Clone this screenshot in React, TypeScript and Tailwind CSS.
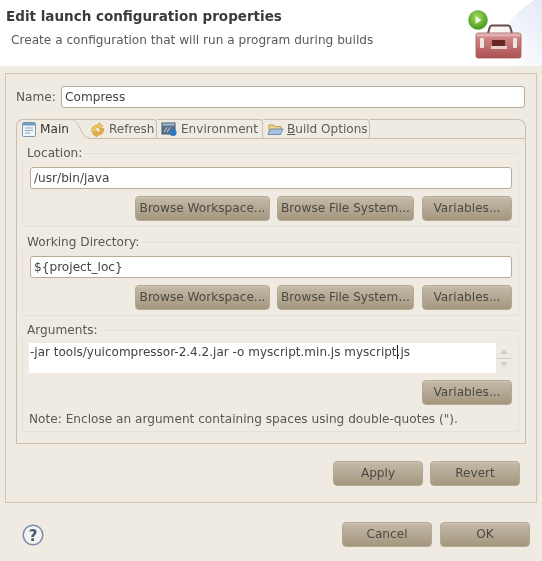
import React from "react";

const font = "font-['DejaVu_Sans',sans-serif]";

function Btn({ label, w }: { label: string; w: string }) {
  return (
    <div
      className={`${w} h-[25px] shrink-0 flex items-center justify-center rounded-[4px] border border-[#b5a995] bg-gradient-to-b from-[#c4baa8] to-[#a4977f] text-[12.13px] text-[#4c4a45] shadow-[inset_0_1px_0_#cfc6b6] whitespace-nowrap`}
    >
      {label}
    </div>
  );
}

function Input({ value }: { value: string }) {
  return (
    <div className="h-[22px] flex items-center px-[3px] bg-white rounded-[3px] border border-[#b8ac98] text-[12.13px] text-[#45433e]">
      {value}
    </div>
  );
}

function Group({ label, className, children }: { label: string; className: string; children: React.ReactNode }) {
  return (
    <div className={className}>
      <div className="h-[16px] flex items-center text-[12.13px] text-[#5a5853]">
        <span className="shrink-0 pl-[5px]">{label}</span>
        <div className="ml-[2px] flex-1 h-px bg-[#e6e1d7]" />
      </div>
      <div className="border border-t-0 border-[#e6e1d7] rounded-b-[3px]">{children}</div>
    </div>
  );
}

const ButtonRow = () => (
  <div className="mt-[7px] flex justify-end">
    <Btn label="Browse Workspace..." w="w-[135px]" />
    <div className="w-[7px]" />
    <Btn label="Browse File System..." w="w-[137px]" />
    <div className="w-[8px]" />
    <Btn label="Variables..." w="w-[90px]" />
  </div>
);

const MainIcon = () => (
  <svg width="16" height="17" viewBox="0 0 16 17" className="shrink-0">
    <rect x="1.5" y="1.5" width="13" height="14" rx="1" fill="#f1f5f8" stroke="#8299ab" />
    <rect x="2" y="2" width="12" height="2.5" fill="#6f9cc0" />
    <path d="M4 7h8M4 9.5h8M4 12h5" stroke="#86a8c4" strokeWidth="1" />
  </svg>
);
const RefreshIcon = () => (
  <svg width="17" height="17" viewBox="0 0 17 17" className="shrink-0">
    <path d="M2.500 11C2 7 5 3.500 9.500 3.800L9.800 1.500 14 5l-4 3.200-.2-2C7.500 6 5.500 7.800 5.500 10.500z" fill="#f0c65a" stroke="#c39a3a" strokeWidth=".6" />
    <path d="M14.500 7.500c.5 4-2.500 7-6.500 6.700L7.700 16 3.500 12.500l4-3 .2 2c2.300.2 4-1.500 4-3.800z" fill="#e9ae3e" stroke="#bb8a2e" strokeWidth=".6" />
  </svg>
);
const EnvIcon = () => (
  <svg width="17" height="16" viewBox="0 0 17 16" className="shrink-0">
    <rect x="1" y="2" width="13" height="11" fill="#5d7290" stroke="#44566e" />
    <rect x="1.500" y="2.500" width="12" height="2" fill="#a9bad0" />
    <path d="M3 11l3-4.500M6 11l3-4.500" stroke="#dfe6ef" strokeWidth=".8" />
    <circle cx="12" cy="11.500" r="3.500" fill="#2f79bd" />
  </svg>
);
const FolderIcon = () => (
  <svg width="17" height="16" viewBox="0 0 17 16" className="shrink-0">
    <path d="M2 13V4h5l1 1.500h6V8" fill="#f2d67e" stroke="#a88f4c" strokeWidth=".8" />
    <path d="M1 13.500 3.500 8H16l-2.500 5.500z" fill="#a9c2e0" stroke="#5f7ea8" strokeWidth=".8" />
  </svg>
);

const Toolbox = () => (
  <svg width="60" height="54" viewBox="0 0 60 54" className="shrink-0">
    <defs>
      <linearGradient id="box" x1="0" y1="0" x2="0" y2="1">
        <stop offset="0" stopColor="#d69292" />
        <stop offset="1" stopColor="#ad5050" />
      </linearGradient>
      <radialGradient id="ball" cx=".45" cy=".35" r=".7">
        <stop offset="0" stopColor="#a4dc5c" />
        <stop offset="1" stopColor="#3f9417" />
      </radialGradient>
    </defs>
    <path d="M21 24l2-6.500q.4-1 2-1h16q1.600 0 2 1L45 24" fill="#f3eeee" fillOpacity=".5" stroke="#6a4a4a" strokeWidth="2" />
    <rect x="9" y="24" width="45" height="25" rx="2" fill="url(#box)" stroke="#a05c5b" strokeWidth=".8" />
    <rect x="9.500" y="24.500" width="44" height="3" fill="#e2b2b0" />
    <rect x="13" y="29" width="4" height="10" rx="1" fill="#f0e6e0" />
    <rect x="46" y="29" width="4" height="10" rx="1" fill="#f0e6e0" />
    <rect x="25" y="31" width="13" height="6" fill="#6a2525" />
    <rect x="24" y="37" width="16" height="3" fill="#e9cfcb" />
    <circle cx="11" cy="11" r="9.500" fill="url(#ball)" stroke="#5aa52a" strokeWidth=".5" />
    <path d="M8.500 7l6 4-6 4z" fill="#eef8df" />
  </svg>
);

const tabBase = "h-[20px] flex items-center gap-[3px] text-[12.05px] whitespace-nowrap border-t border-r border-b border-[#c9bfac] rounded-tr-[4px] shrink-0";

export default function App() {
  return (
    <div className={`${font} w-[542px] h-[561px] bg-[#efebe2] overflow-hidden flex flex-col text-[#55534e] blur-[0.4px]`}>
      <div className="h-[66px] shrink-0 bg-white relative">
        <svg width="60" height="66" viewBox="0 0 60 66" className="absolute right-0 top-0">
          <defs>
            <linearGradient id="wash" x1="1" y1="0" x2="0" y2="1">
              <stop offset="0" stopColor="#e3e9f5" />
              <stop offset=".8" stopColor="#ffffff" />
            </linearGradient>
          </defs>
          <path d="M52 0Q18 22 4 66H60V0z" fill="url(#wash)" />
        </svg>
        <div className="relative pl-[6px] pt-[7px] text-[13.5px] font-bold text-[#3c3b38] leading-[18px]">Edit launch configuration properties</div>
        <div className="relative pl-[11px] pt-[7px] text-[12.13px] text-[#5a5955] leading-[16px]">Create a configuration that will run a program during builds</div>
        <div className="absolute left-[467px] top-[9px]"><Toolbox /></div>
      </div>

      <div className="mx-[5px] mt-[7px] h-[430px] shrink-0 border border-[#cfc5b2] px-[10px] pt-[12px] flex flex-col">
        <div className="flex items-center h-[22px] pr-[1px]">
          <span className="w-[45px] text-[12.13px] text-[#5a5853]">Name:</span>
          <div className="flex-1"><Input value="Compress" /></div>
        </div>

        <div className="mt-[11px] h-[325px] shrink-0 flex flex-col">
          <div className="h-[20px] shrink-0 flex relative">
            <div className="w-[72px] flex items-center gap-[3px] pl-[4px] text-[12.13px] text-[#33322f] border-t border-l border-[#c9bfac] rounded-tl-[7px] shrink-0">
              <MainIcon />Main
            </div>
            <svg width="18" height="20" viewBox="0 0 18 20" className="absolute left-[56px] top-0">
              <path d="M0 .5C8 .5 8 19.500 18 19.500" fill="#efebe2" stroke="#c9bfac" />
            </svg>
            <div className={`${tabBase} w-[69px] pl-[1px]`}><RefreshIcon /><span className="text-[#5f5d58]">Refresh</span></div>
            <div className={`${tabBase} w-[106px] pl-[4px]`}><EnvIcon /><span className="text-[#5f5d58]">Environment</span></div>
            <div className={`${tabBase} w-[107px] pl-[4px]`}>
              <FolderIcon />
              <span className="text-[#5f5d58]"><span className="underline">B</span>uild Options</span>
            </div>
            <div className="flex-1 border-t border-r border-b border-[#c9bfac] rounded-tr-[8px]" />
          </div>

          <div className="flex-1 border border-t-0 border-[#c9bfac] px-[5px] pt-[6px]">
            <Group label="Location:" className="mr-[1px]">
              <div className="pt-[6px] pl-[7px] pr-[6px] pb-[5px]">
                <Input value="/usr/bin/java" />
                <ButtonRow />
              </div>
            </Group>
            <Group label="Working Directory:" className="mt-[7px] mr-[1px]">
              <div className="pt-[6px] pl-[7px] pr-[6px] pb-[5px]">
                <Input value="${project_loc}" />
                <ButtonRow />
              </div>
            </Group>
            <Group label="Arguments:" className="mt-[6px] mr-[1px]">
              <div className="pt-[5px] pl-[6px] pr-[6px] pb-[4px]">
                <div className="flex h-[30px]">
                  <div className="flex-1 bg-white pl-[1px] pt-[1px] text-[12.03px] leading-[16px] text-[#45433e] whitespace-nowrap">
                    -jar tools/yuicompressor-2.4.2.jar -o myscript.min.js myscript<span className="border-l border-[#222] -mr-px" />.js
                  </div>
                  <div className="w-[16px] flex flex-col items-center justify-between py-[6px] relative">
                    <div className="w-0 h-0 border-x-[4px] border-x-transparent border-b-[5px] border-b-[#d4cfc4]" />
                    <div className="absolute left-0 -right-px top-[15px] h-px bg-[#d4cfc4]" />
                    <div className="w-0 h-0 border-x-[4px] border-x-transparent border-t-[5px] border-t-[#d4cfc4]" />
                  </div>
                </div>
                <div className="mt-[7px] flex justify-end"><Btn label="Variables..." w="w-[90px]" /></div>
                <div className="mt-[6px] text-[12.13px] leading-[16px] text-[#5a5853]">Note: Enclose an argument containing spaces using double-quotes (").</div>
              </div>
            </Group>
          </div>
        </div>

        <div className="mt-[17px] flex justify-end gap-[7px] pr-[6px]">
          <Btn label="Apply" w="w-[90px]" />
          <Btn label="Revert" w="w-[90px]" />
        </div>
      </div>

      <div className="mt-[19px] flex items-center h-[25px] pl-[22px] pr-[12px]">
        <svg width="22" height="22" viewBox="0 0 22 22" className="shrink-0">
          <circle cx="11" cy="11" r="9.800" fill="#f4f3f2" stroke="#7a8db0" strokeWidth="1.500" />
          <text x="11" y="16.500" textAnchor="middle" fontSize="15" fontWeight="bold" fill="#4a5570" fontFamily="DejaVu Sans">?</text>
        </svg>
        <div className="flex-1" />
        <div className="flex gap-[8px]">
          <Btn label="Cancel" w="w-[90px]" />
          <Btn label="OK" w="w-[90px]" />
        </div>
      </div>
    </div>
  );
}
